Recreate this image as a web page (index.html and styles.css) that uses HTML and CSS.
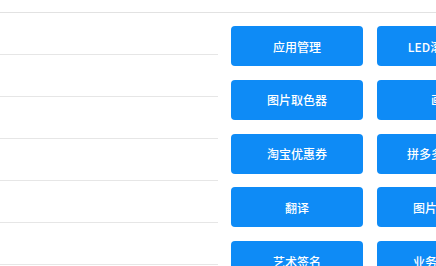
FILE: index.html
```html
<!DOCTYPE html>
<html lang="zh-CN">
<head>
<meta charset="utf-8">
<link rel="stylesheet" href="styles.css">
</head>
<body>
<div class="page">
  <div class="topbar"></div>
  <div class="main">
    <div class="list">
      <div class="row"></div>
      <div class="row"></div>
      <div class="row"></div>
      <div class="row"></div>
      <div class="row"></div>
      <div class="row"></div>
    </div>
    <div class="tools">
      <button class="tool">应用管理</button>
      <button class="tool">LED滚动字幕</button>
      <button class="tool">图片取色器</button>
      <button class="tool">画板</button>
      <button class="tool">淘宝优惠券</button>
      <button class="tool">拼多多优惠券</button>
      <button class="tool">翻译</button>
      <button class="tool">图片加水印</button>
      <button class="tool">艺术签名</button>
      <button class="tool">业务办理器</button>
    </div>
  </div>
</div>
</body>
</html>
```

FILE: styles.css
```css
html, body {
  margin: 0;
  padding: 0;
  background: #ffffff;
  overflow: hidden;
}
.page {
  width: 436px;
  height: 266px;
  overflow: hidden;
  font-family: "Noto Sans CJK SC", "Noto Sans", sans-serif;
}
.topbar {
  height: 12px;
  border-bottom: 1px solid #e2e2e2;
}
.main {
  display: flex;
  gap: 13px;
  align-items: flex-start;
}
.list {
  width: 218px;
  flex: none;
}
.row {
  height: 41px;
  border-bottom: 1px solid #e6e6e6;
}
.tools {
  flex: none;
  display: grid;
  grid-template-columns: 132px 132px;
  column-gap: 14px;
  row-gap: 13.75px;
  padding-top: 13px;
}
.tool {
  height: 40px;
  border: none;
  border-radius: 4px;
  background: #0e8bf6;
  color: #ffffff;
  font-family: "Noto Sans CJK SC", "Noto Sans", sans-serif;
  font-size: 12px;
  font-weight: 500;
  padding: 0;
  white-space: nowrap;
}
```
